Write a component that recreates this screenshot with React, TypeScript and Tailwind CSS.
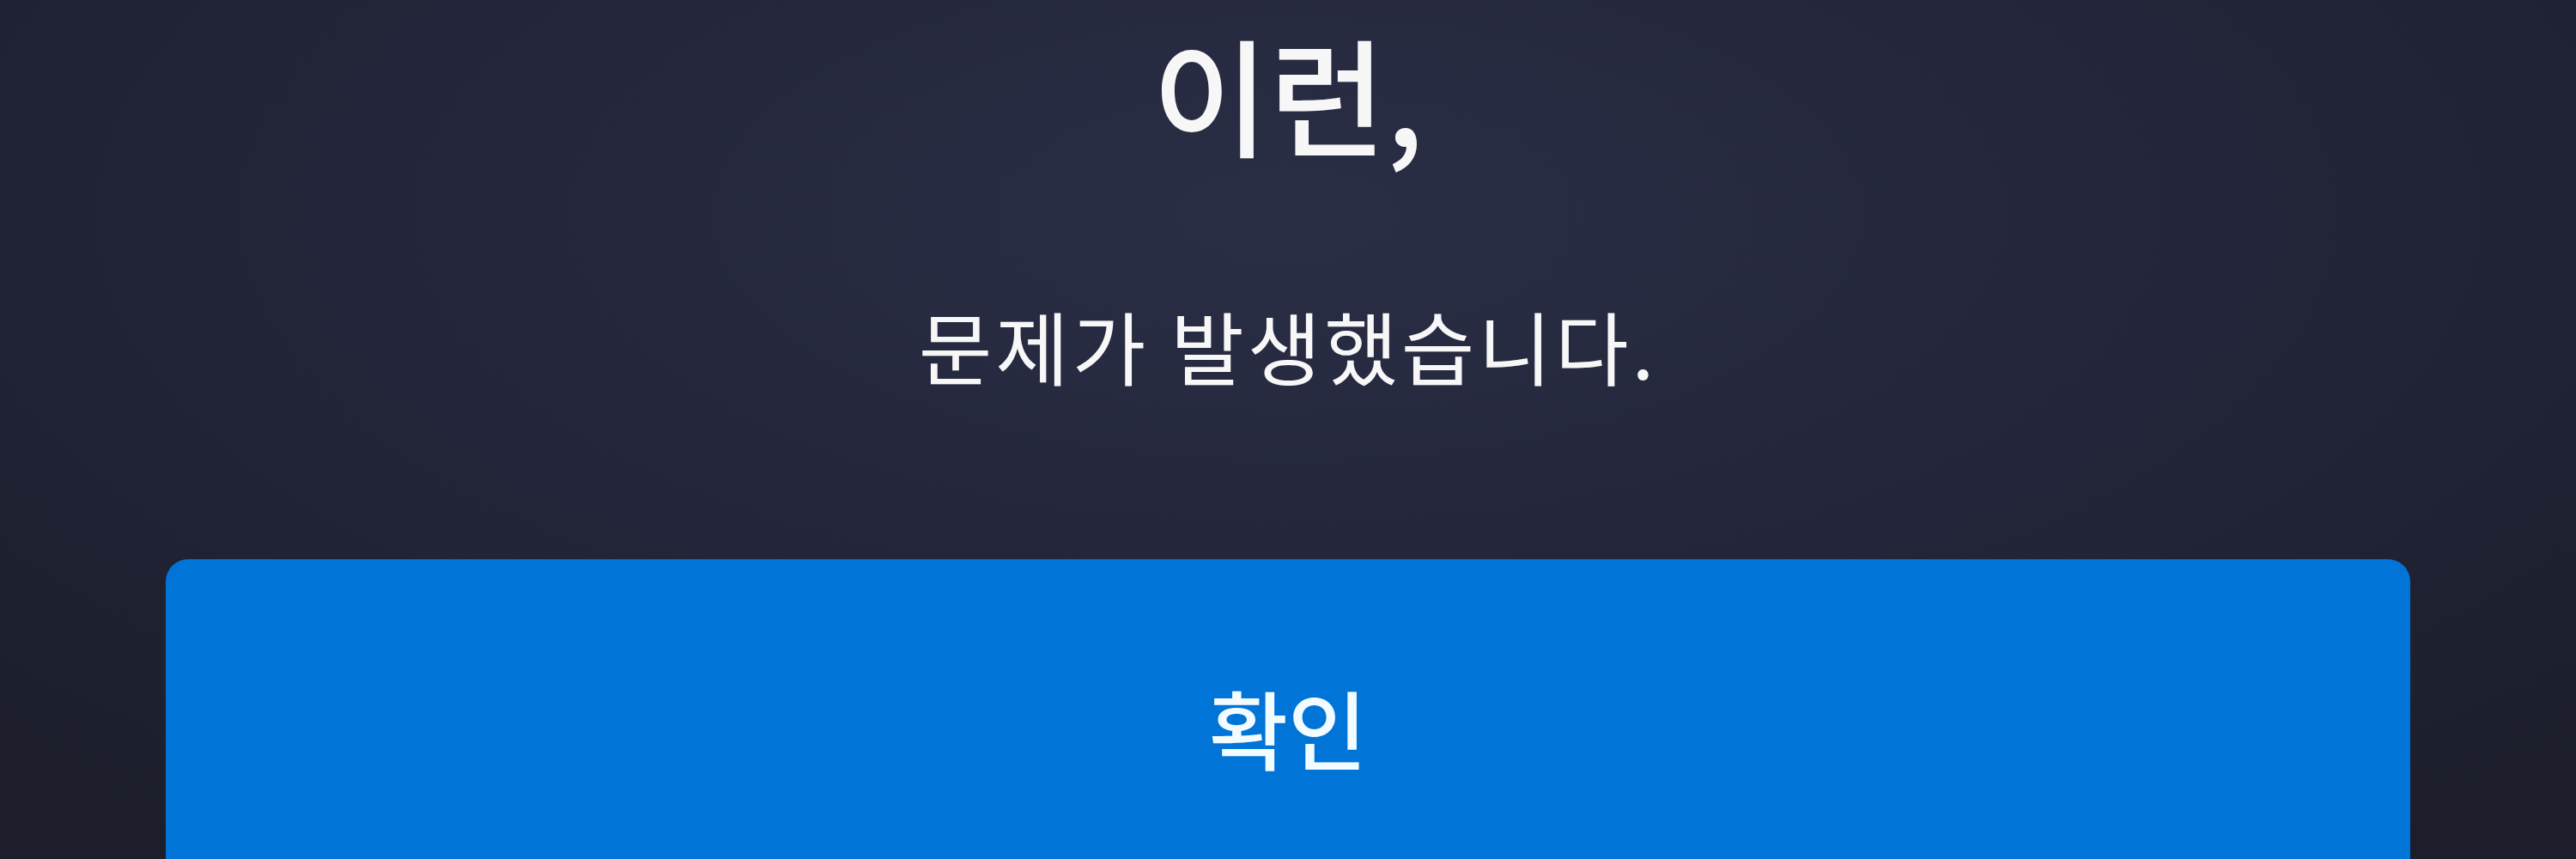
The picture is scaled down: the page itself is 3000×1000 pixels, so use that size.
export default function App() {
  return (
    <div
      className="flex h-[1000px] w-full flex-col items-center overflow-hidden bg-[radial-gradient(ellipse_70%_90%_at_50%_25%,#2a2e45_0%,#23263a_50%,#1c1e2c_100%)] text-[#f7f7f8]"
      style={{ fontFamily: '"Noto Sans CJK KR", "Noto Sans", sans-serif' }}
    >
      <h1 className="mt-[33px] text-[148px] font-medium leading-none">이런,</h1>
      <p className="mt-[174px] text-[93px] font-normal leading-none tracking-[4px]">문제가 발생했습니다.</p>
      <div className="mt-[203px] w-full shrink-0 px-[193px]">
        <button
          type="button"
          className="flex h-[402px] w-full items-center justify-center rounded-[26px] bg-[#0174d8] pb-[12px] text-[100px] font-medium leading-none text-[#f2fbff]"
        >
          확인
        </button>
      </div>
    </div>
  );
}
